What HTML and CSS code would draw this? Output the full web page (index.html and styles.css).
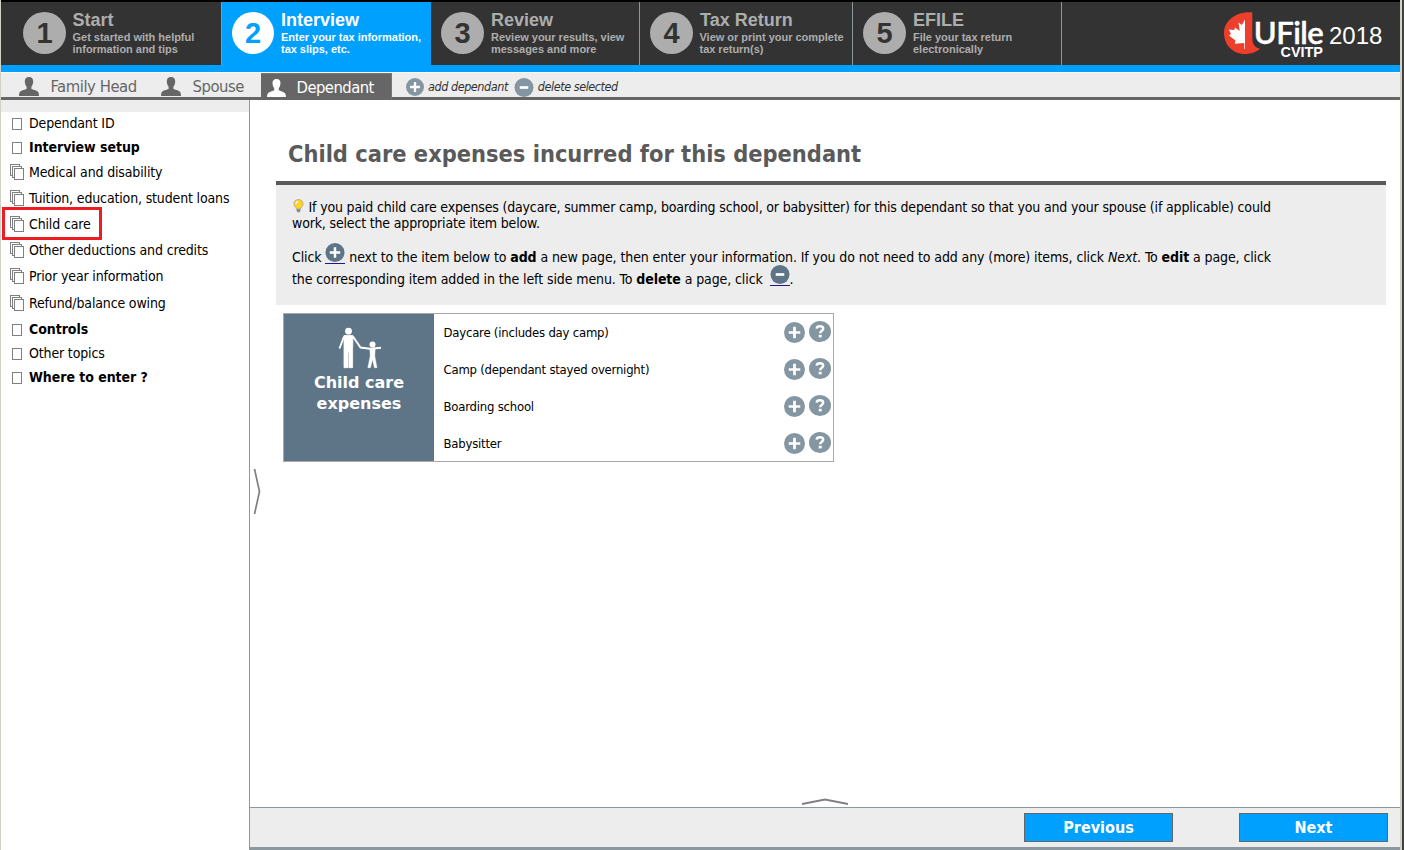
FILE: index.html
```html
<!DOCTYPE html>
<html lang="en">
<head>
<meta charset="utf-8">
<title>UFile CVITP 2018</title>
<link rel="stylesheet" href="styles.css">
</head>
<body>
<svg class="defs" width="0" height="0">
  <symbol id="person" viewBox="0 0 20 19"><path d="M10 0C7 0 5.700 1.900 5.800 4.500C5.900 7 6.600 8.500 7.600 9.700V12L3 13.600C.8 14.500 0 15.800 0 19H20C20 15.800 19.200 14.500 17 13.600L12.400 12V9.700C13.400 8.500 14.100 7 14.200 4.500C14.300 1.900 13 0 10 0Z" fill="currentColor"/></symbol>
  <symbol id="plus" viewBox="0 0 20 20"><circle cx="10" cy="10" r="10" fill="currentColor"/><path d="M10 4.500V15.500M4.500 10H15.500" stroke="#fff" stroke-width="2.600"/></symbol>
  <symbol id="minus" viewBox="0 0 20 20"><circle cx="10" cy="10" r="10" fill="currentColor"/><path d="M5.500 10H14.500" stroke="#fff" stroke-width="2.800"/></symbol>
  <symbol id="help" viewBox="0 0 22 21"><ellipse cx="11" cy="10.500" rx="11" ry="10.500" fill="currentColor"/><path d="M7.600 7.700C7.800 5.900 9.200 5.300 11 5.300C13 5.300 14.200 6.200 14.200 7.700C14.200 9.800 11.200 9.800 11.200 12.300" fill="none" stroke="#fff" stroke-width="2.400"/><rect x="9.700" y="13.800" width="3" height="2.600" fill="#fff"/></symbol>
  <symbol id="page" viewBox="0 0 14 16"><rect x="2.500" y="3.500" width="9" height="11" fill="#fff" stroke="#808080"/></symbol>
  <symbol id="pages" viewBox="0 0 14 16"><g fill="#fff" stroke="#808080"><rect x=".5" y=".5" width="9" height="11"/><rect x="2.500" y="2.500" width="9" height="11"/><rect x="4.500" y="4.500" width="9" height="11"/></g></symbol>
</svg>
<div class="app">
  <header class="steps">
    <div class="step first"><div class="num">1</div><div class="label"><h2>Start</h2><p>Get started with helpful<br>information and tips</p></div></div>
    <div class="step active"><div class="num">2</div><div class="label"><h2>Interview</h2><p>Enter your tax information,<br>tax slips, etc.</p></div></div>
    <div class="step"><div class="num">3</div><div class="label"><h2>Review</h2><p>Review your results, view<br>messages and more</p></div></div>
    <div class="step wide"><div class="num">4</div><div class="label"><h2>Tax Return</h2><p>View or print your complete<br>tax return(s)</p></div></div>
    <div class="step"><div class="num">5</div><div class="label"><h2>EFILE</h2><p>File your tax return<br>electronically</p></div></div>
    <svg class="logo" width="164" height="54" viewBox="0 0 164 54">
      <path d="M28.300 10.300C14 8.800 0 17.500 0 31C0 43.500 9.500 52 21 52C27.500 52 33 49.800 36 46.500C31 46 28.300 42 28.300 36Z" fill="#ee3e2c"/>
      <path d="M21 17.500L17.800 23L14.500 20.500L15.700 29L11 25.500L10.300 28L4.800 27.500L7 32L5 33.500L11.500 38.500L10.800 41.800L20.300 41V47H21Z" fill="#fff"/>
      <text class="brand" x="29.800" y="41.500" textLength="70">UFile</text>
      <text class="edition" x="56.500" y="54.700" textLength="42.500" lengthAdjust="spacingAndGlyphs">CVITP</text>
      <text class="year" x="105" y="42">2018</text>
    </svg>
  </header>
  <nav class="tabs">
    <div class="tab"><svg width="20" height="19"><use href="#person"/></svg>Family Head</div>
    <div class="tab spouse"><svg width="20" height="19"><use href="#person"/></svg>Spouse</div>
    <div class="tab current"><svg width="19" height="18"><use href="#person"/></svg>Dependant</div>
    <div class="action add"><svg width="18" height="18"><use href="#plus"/></svg>add dependant</div>
    <div class="action"><svg width="20" height="19"><use href="#minus"/></svg>delete selected</div>
  </nav>
  <div class="body">
    <aside class="side">
      <ul>
        <li><svg><use href="#page"/></svg>Dependant ID</li>
        <li class="strong"><svg><use href="#page"/></svg>Interview setup</li>
        <li class="multi"><svg><use href="#pages"/></svg>Medical and disability</li>
        <li class="multi"><svg><use href="#pages"/></svg>Tuition, education, student loans</li>
        <li class="multi marked"><svg><use href="#pages"/></svg>Child care</li>
        <li class="multi"><svg><use href="#pages"/></svg>Other deductions and credits</li>
        <li class="multi"><svg><use href="#pages"/></svg>Prior year information</li>
        <li class="multi last"><svg><use href="#pages"/></svg>Refund/balance owing</li>
        <li class="strong"><svg><use href="#page"/></svg>Controls</li>
        <li><svg><use href="#page"/></svg>Other topics</li>
        <li class="strong"><svg><use href="#page"/></svg>Where to enter ?</li>
      </ul>
    </aside>
    <div class="work">
      <main class="content">
        <h1>Child care expenses incurred for this dependant</h1>
        <section class="info">
          <p class="tip"><svg class="bulb" width="11" height="14" viewBox="0 0 11 14"><path d="M5.500 .6C2.600 .6 1 2.500 1 4.900C1 7.200 3 8 3.500 10H7.500C8 8 10 7.200 10 4.900C10 2.500 8.400 .6 5.500 .6Z" fill="#ffd326" stroke="#b9a77a" stroke-width=".9"/><path d="M3.200 5C3.200 3.300 4 2.500 5.200 2.400" stroke="#fff" stroke-width="1.400" fill="none"/><path d="M3.600 10H7.400V12L6.500 13.300H4.500L3.600 12Z" fill="#858b93"/></svg>If you paid child care expenses (daycare, summer camp, boarding school, or babysitter) for this dependant so that you and your spouse (if applicable) could<br>work, select the appropriate item below.</p>
          <p class="howto">Click <span class="key"><svg width="20" height="19"><use href="#plus"/></svg></span> next to the item below to <b>add</b> a new page, then enter your information. If you do not need to add any (more) items, click <i>Next</i>. To <b>edit</b> a page, click<br>the corresponding item added in the left side menu. To <b>delete</b> a page, click <span class="key del"><svg width="20" height="19"><use href="#minus"/></svg></span>.</p>
        </section>
        <section class="card">
          <div class="kind">
            <svg width="44" height="42" viewBox="0 0 44 42"><g fill="#fff" stroke="#fff"><circle cx="10.500" cy="4.200" r="3.400" stroke="none"/><path d="M6 8.500H15L14.600 23V40.700H11V25H10V40.700H6V23Z" stroke-width=".8"/><path d="M6 9.500L1.500 21.500M15 9.500L22.500 20.500L32 21.800L43 20.800" fill="none" stroke-width="1.900"/><circle cx="34.500" cy="17.500" r="3" stroke="none"/><path d="M31.800 21.500H37.200L36.800 29L39 40.700H36.400L34.500 32.500L32.500 40.700H29.800L32.200 29Z" stroke-width=".4"/></g></svg>
            <h3>Child care<br>expenses</h3>
          </div>
          <ul class="items">
            <li><span>Daycare (includes day camp)</span><svg width="21" height="21"><use href="#plus"/></svg><svg class="q" width="22" height="21"><use href="#help"/></svg></li>
            <li><span>Camp (dependant stayed overnight)</span><svg width="21" height="21"><use href="#plus"/></svg><svg class="q" width="22" height="21"><use href="#help"/></svg></li>
            <li><span>Boarding school</span><svg width="21" height="21"><use href="#plus"/></svg><svg class="q" width="22" height="21"><use href="#help"/></svg></li>
            <li><span>Babysitter</span><svg width="21" height="21"><use href="#plus"/></svg><svg class="q" width="22" height="21"><use href="#help"/></svg></li>
          </ul>
        </section>
        <svg class="grip-left" width="8" height="48"><path d="M1.500 1L6.500 23.500L1.500 46" fill="none" stroke="#808080" stroke-width="1.700"/></svg>
        <svg class="grip-bottom" width="48" height="8"><path d="M1 6L24 1.500L47 6" fill="none" stroke="#808080" stroke-width="1.800"/></svg>
      </main>
      <footer class="actions"><button>Previous</button><button>Next</button></footer>
    </div>
  </div>
</div>
</body>
</html>
```
FILE: styles.css
```css
* { box-sizing: border-box; margin: 0; padding: 0; }
html, body { height: 100%; overflow: hidden; }
body { font: 14px/16px "DejaVu Sans Condensed", "DejaVu Sans", sans-serif; color: #000; background: #fff; }
ul { list-style: none; }
svg { flex: none; display: block; }
.defs { position: absolute; }
.app { height: 850px; width: 1404px; display: flex; flex-direction: column; border-left: 1px solid #d4d0c8; border-right: 2px solid #404040; box-shadow: inset -2px 0 #d4d0c8; padding-right: 2px; }

.steps { height: 72px; display: flex; background: #333; border-top: 2px solid #000; border-bottom: 7px solid #00a0ff; font-family: "Liberation Sans", Arial, sans-serif; font-weight: bold; color: #adadad; white-space: nowrap; }
.step { width: 209px; display: flex; gap: 7px; padding: 10px 0 0 10px; border-right: 1px solid #8d979e; }
.step.first { width: 221px; padding-left: 22px; }
.step.wide { width: 213px; }
.step.active { background: #00a0ff; border-right-color: #00a0ff; color: #fff; }
.num { width: 43px; height: 42px; border-radius: 50%; background: #adadad; color: #333; font-size: 29px; line-height: 42px; text-align: center; }
.active .num { width: 42px; background: #fff; color: #00a0ff; }
.label { margin-top: -2px; }
.label h2 { font-size: 18px; line-height: 20px; }
.label p { font-size: 11px; line-height: 12px; margin-top: 1px; letter-spacing: -.02px; }
.first .label, .wide .label p { margin-left: -.5px; }
.logo { margin: 0 12px 0 auto; overflow: visible; }
.brand { font: 600 31px Lato, sans-serif; fill: #fff; stroke: #fff; stroke-width: .4px; }
.edition { font: bold 14px "Liberation Sans", Arial, sans-serif; fill: #fff; }
.year { font: 24px "Liberation Sans", Arial, sans-serif; fill: #fff; }

.tabs { height: 28px; display: flex; background: #ededed; border-top: 1px solid #fff; border-bottom: 3px solid #666; color: #666; }
.tab { width: 142px; padding: 4px 0 0 18px; display: flex; gap: 11.500px; font-size: 16.500px; line-height: 20px; letter-spacing: -.45px; white-space: nowrap; }
.tab.spouse { width: 118px; }
.tab.current { width: 131px; margin-bottom: -3px; padding: 5px 0 0 6px; background: #666; color: #fff; border: 1px solid #777; border-width: 1px 1px 0 0; gap: 10.500px; line-height: 17px; letter-spacing: -.55px; }
.action { display: flex; gap: 4px; align-items: center; font-style: italic; font-size: 12.500px; letter-spacing: -.44px; color: #333; height: 28px; margin-right: 6px; white-space: nowrap; }
.action.add { margin-left: 14px; }
.action svg { color: #8596a3; }

.body { flex: 1; display: flex; min-height: 0; }
.side { width: 249px; border-right: 1px solid #8c98a0; background: linear-gradient(#ededed 12px, #fff 12px); padding: 11px 0 0 9px; }
.side li { height: 24px; display: flex; align-items: center; gap: 5px; letter-spacing: -.15px; white-space: nowrap; }
.side li svg { width: 14px; height: 16px; }
.side li.strong { font-weight: bold; letter-spacing: -.05px; }
.side li.multi { height: 26px; }
.side li.last { height: 28px; }
.side li.marked { height: 33px; width: 100px; margin: -4px 0 -3px -8px; padding-left: 5px; border: 3px solid #ed1c24; }

.work { flex: 1; display: flex; flex-direction: column; }
.content { flex: 1; position: relative; padding: 40px 14px 0 26px; }
h1 { height: 45px; padding-left: 12px; font-size: 23.400px; line-height: 28px; color: #5a5a5a; border-bottom: 4px solid #5a5a5a; white-space: nowrap; }
.info { height: 120px; background: #ededed; padding: 14px 0 0 16px; letter-spacing: -.165px; white-space: nowrap; }
.bulb { display: inline-block; vertical-align: -1px; margin: -2px 4.500px 0 1px; }
.howto { margin-top: 15px; line-height: 22px; letter-spacing: -.1px; }
.key { display: inline-block; height: 21px; border-bottom: 1px solid #1a1a8c; vertical-align: -2px; margin-top: -8px; color: #5e7588; }
.key.del { margin-left: 3px; }
.card { width: 551px; height: 149px; margin: 8px 0 0 7px; display: flex; border: 1px solid #a9a9a9; }
.kind { width: 150px; background: #5e7588; color: #fff; padding-top: 13px; }
.kind svg { margin-left: 54px; }
.kind h3 { font: bold 16px/21px "DejaVu Sans", sans-serif; text-align: center; margin-top: 3px; }
.items { flex: 1; }
.items li { height: 37px; display: flex; align-items: center; padding: 0 2px 0 9.500px; font-size: 13px; letter-spacing: -.22px; color: #000; }
.items span { flex: 1; }
.items svg { color: #8596a3; }
.items .q { margin: -2px 0 0 4px; }
.grip-left { position: absolute; left: 3px; top: 368px; }
.grip-bottom { position: absolute; left: 551px; bottom: 1px; }

.actions { height: 43px; background: #ededed; border-top: 1px solid #8c98a0; border-bottom: 3px solid #8c98a0; display: flex; justify-content: flex-end; gap: 66px; padding: 5px 12px 0 0; }
.actions button { width: 149px; height: 29px; background: #00a0ff; border: 1px solid #666; color: #fff; font: bold 16px "DejaVu Sans Condensed", sans-serif; }
```
